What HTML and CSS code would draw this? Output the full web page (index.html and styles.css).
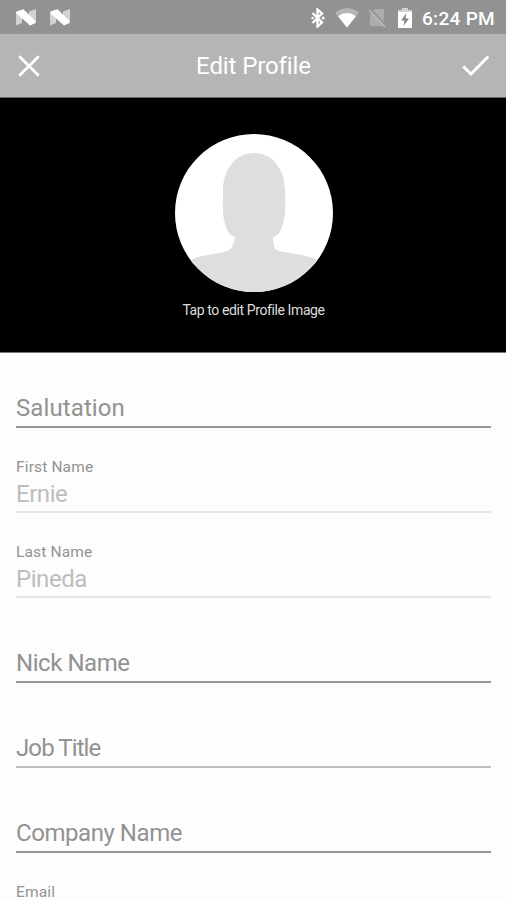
FILE: index.html
```html
<!DOCTYPE html>
<html lang="en">
<head>
    <meta charset="UTF-8">
    <meta name="viewport" content="width=device-width, initial-scale=1.0">
    <title>Edit Profile</title>
    <link rel="stylesheet" href="styles.css">
</head>
<body>
    <div class="status-bar">
        <svg class="nougat" viewBox="0 0 20 17">
            <path class="dim" d="M0 3 L6 0.5 V14 L0 16.5 Z M13 2.5 L20 0 V13.5 L13 16 Z"/>
            <path d="M0.5 2.5 L7.5 0.3 L19.5 12 V14 L14 16.5 L0.5 4.5 Z"/>
        </svg>
        <svg class="nougat" viewBox="0 0 20 17">
            <path class="dim" d="M0 3 L6 0.5 V14 L0 16.5 Z M13 2.5 L20 0 V13.5 L13 16 Z"/>
            <path d="M0.5 2.5 L7.5 0.3 L19.5 12 V14 L14 16.5 L0.5 4.5 Z"/>
        </svg>
        <svg class="bluetooth" viewBox="0 0 14 20">
            <path class="line" d="M1.5 5 L11 14.5 L6.5 18.5 V1.5 L11 5.5 L1.5 15"/>
            <circle cx="1.6" cy="10" r="1.3"/>
            <circle cx="12.2" cy="10" r="1.5"/>
        </svg>
        <svg class="wifi" viewBox="0 0 24 20">
            <path class="dim" d="M0 4.5 Q12 -4 24 4.5 L12 19.5 Z"/>
            <path d="M3 8.2 Q12 2 21 8.2 L12 19.5 Z"/>
        </svg>
        <svg class="sim" viewBox="0 0 18 20">
            <path class="faint" d="M7 1 H15 Q16 1 16 2 V18 H2 V5.5 Z"/>
            <path class="gap" d="M2.5 1 L18 17.5"/>
            <path class="slash" d="M1 2 L17 19"/>
        </svg>
        <svg class="battery" viewBox="0 0 14 20">
            <path class="dim" d="M4 0 H10 V2 H14 V5 H0 V2 H4 Z"/>
            <path d="M0 4 H14 V20 H0 Z"/>
            <path class="bolt" d="M8.5 5 L3 12.5 H6.5 L5.5 18 L11 10.5 H7.5 Z"/>
        </svg>
        <span class="time">6:24 PM</span>
    </div>

    <div class="toolbar">
        <svg class="close" viewBox="0 0 22 22"><path d="M1.2 1.2 L20.8 20.8 M20.8 1.2 L1.2 20.8"/></svg>
        <h1>Edit Profile</h1>
        <svg class="check" viewBox="0 0 28 22"><path d="M1.3 11.5 L9 19 L26.3 1.5"/></svg>
    </div>

    <div class="photo">
        <svg class="avatar" viewBox="0 0 158 158">
            <clipPath id="round"><circle cx="79" cy="79" r="79"/></clipPath>
            <circle cx="79" cy="79" r="79" fill="#fff"/>
            <path clip-path="url(#round)" fill="#dededc" d="M79 19 C97 19 109 34 110 55 C111 73 110 83 108 90 C106 97 103 102 98 103 C98 110 99 116 104 117 C118 120 134 121 144 127 V158 H14 V127 C23 121 40 121 52 117 C57 115 59 110 60 103 C55 102 52 97 50 90 C47 81 48 67 48 55 C49 34 61 19 79 19 Z"/>
        </svg>
        <p>Tap to edit Profile Image</p>
    </div>

    <div class="form">
        <div class="field first"><span class="hint salutation">Salutation</span></div>
        <div class="field disabled">
            <span class="label">First Name</span>
            <span class="value">Ernie</span>
        </div>
        <div class="field disabled">
            <span class="label">Last Name</span>
            <span class="value">Pineda</span>
        </div>
        <div class="field"><span class="hint">Nick Name</span></div>
        <div class="field soft"><span class="hint job">Job Title</span></div>
        <div class="field"><span class="hint">Company Name</span></div>
        <div class="field email"><span class="label">Email</span></div>
    </div>
</body>
</html>
```

FILE: styles.css
```css
* {
    box-sizing: border-box;
}
body {
    margin: 0;
    height: 900px;
    overflow: hidden;
    display: flex;
    flex-direction: column;
    background-color: #fdfdfd;
    font-family: Roboto, "Liberation Sans", sans-serif;
}
svg {
    display: block;
    flex: none;
    fill: #fff;
}

/* status bar */
.status-bar {
    flex: none;
    height: 34px;
    padding: 1px 11px 0 16px;
    display: flex;
    align-items: center;
    background-color: #929292;
}
.dim {
    fill: #d2d2d2;
}
.faint {
    fill: #adadad;
}
.nougat {
    width: 20px;
    height: 17px;
    margin-right: 14px;
}
.bluetooth {
    width: 14px;
    height: 20px;
    margin-left: auto;
}
.line {
    fill: none;
    stroke: #fff;
    stroke-width: 2.3;
}
.wifi {
    width: 24px;
    height: 20px;
    margin-left: 10px;
}
.wifi .dim {
    fill: #b5b5b5;
}
.sim {
    width: 18px;
    height: 20px;
    margin-left: 9px;
}
.slash,
.gap {
    fill: none;
    stroke: #b9b9b9;
    stroke-width: 1.6;
}
.gap {
    stroke: #929292;
}
.battery {
    width: 14px;
    height: 20px;
    margin-left: 12px;
}
.bolt {
    fill: #858585;
}
.time {
    width: 73px;
    margin-left: 10px;
    padding-top: 2px;
    color: #fff;
    font-size: 19px;
    font-weight: 500;
    line-height: 22px;
    letter-spacing: 0.3px;
    white-space: nowrap;
}

/* toolbar */
.toolbar {
    flex: none;
    height: 64px;
    padding: 0 16px 0 18px;
    display: flex;
    align-items: center;
    justify-content: space-between;
    background-color: #b5b5b5;
    border-bottom: 1px solid #666;
}
.toolbar svg {
    fill: none;
    stroke: #fff;
    stroke-width: 2.8;
}
.close {
    width: 22px;
    height: 22px;
}
.check {
    width: 28px;
    height: 22px;
}
.toolbar h1 {
    margin: 0 0 0 5px;
    color: #fff;
    font-size: 24px;
    font-weight: 400;
    line-height: 28px;
    letter-spacing: -0.1px;
}

/* profile image */
.photo {
    flex: none;
    height: 255px;
    padding: 36px 0 0 1px;
    display: flex;
    flex-direction: column;
    align-items: center;
    background-color: #000;
    border-bottom: 1px solid #777;
}
.avatar {
    width: 158px;
    height: 158px;
}
.photo p {
    margin: 9px 0 0;
    color: #ddd;
    font-size: 14px;
    line-height: 18px;
    letter-spacing: -0.4px;
}

/* form */
.form {
    padding: 0 15px 0 16px;
}
.field {
    height: 85px;
    padding-bottom: 4px;
    display: flex;
    flex-direction: column;
    justify-content: flex-end;
    border-bottom: 2px solid #969696;
}
.first {
    height: 75px;
}
.soft {
    border-bottom-color: #bdbdbd;
}
.disabled {
    padding-bottom: 3px;
    border-bottom-color: #e6e6e6;
}
.hint,
.value {
    color: #929292;
    font-size: 24px;
    line-height: 28px;
    letter-spacing: -0.45px;
    white-space: nowrap;
}
.salutation {
    letter-spacing: 0.1px;
}
.job {
    letter-spacing: -0.9px;
}
.value {
    color: #bdbdbd;
}
.label {
    margin-bottom: 4px;
    color: #929292;
    font-size: 15.5px;
    line-height: 18px;
    letter-spacing: 0.15px;
    white-space: nowrap;
}
.email {
    justify-content: flex-start;
    padding-top: 30px;
    border: 0;
}
```
